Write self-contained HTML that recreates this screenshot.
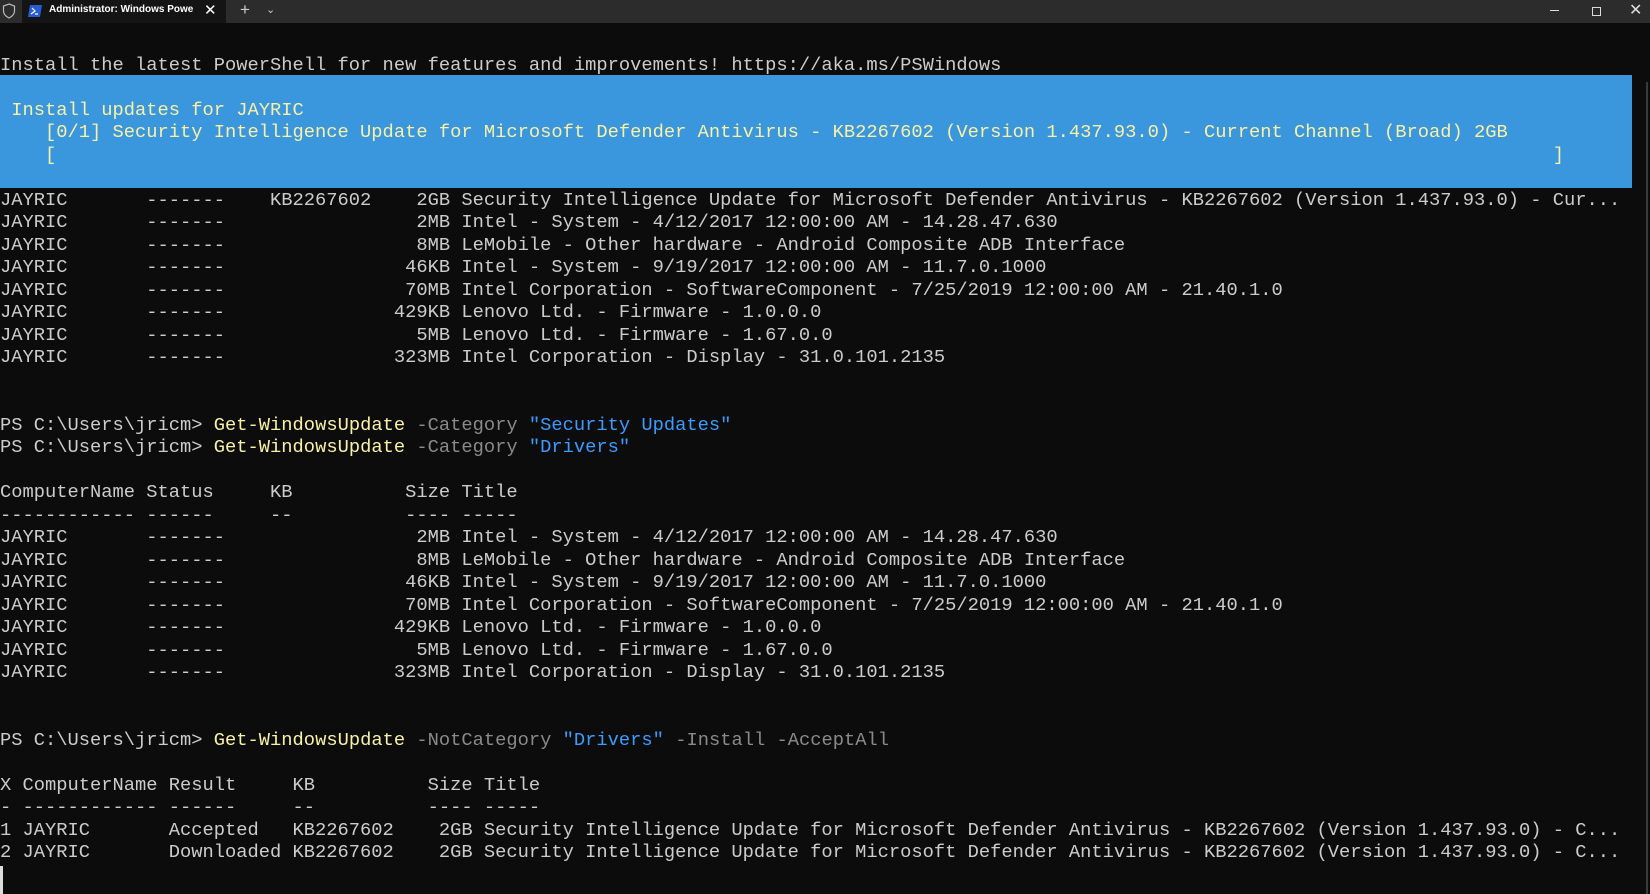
<!DOCTYPE html>
<html><head><meta charset="utf-8"><style>
html,body{margin:0;padding:0;background:#0c0c0c;width:1650px;height:894px;overflow:hidden}
#bar{position:absolute;left:0;top:0;width:1650px;height:23px;background:#2c2c2c}
#tab{position:absolute;left:22px;top:0;width:204px;height:23px;background:#141414;font:bold 10px "Liberation Sans",sans-serif;color:#fff}
#blue{position:absolute;left:0;top:75px;width:1632px;height:113px;background:#3a96dd}
pre{position:absolute;left:0;top:53.5px;margin:0;font:18.75px/22.5px "Liberation Mono",monospace;color:#cccccc;white-space:pre}
.y{color:#f9f1a5}.g{color:#8a8a8a}.b{color:#3b9bff}
</style></head><body>
<div id="bar">
 <svg style="position:absolute;left:2px;top:3px" width="14" height="16"><path d="M7 1 L12.5 3 V8 C12.5 11.5 10 13.5 7 15 C4 13.5 1.5 11.5 1.5 8 V3 Z" fill="none" stroke="#bbb" stroke-width="1.2"/></svg>
 <div id="tab">
  <svg style="position:absolute;left:6px;top:5px" width="14" height="12"><path d="M2 0 H14 L12 12 H0 Z" fill="#2a5bd6"/><path d="M4 3 L7 6 L3 9 M7 9 H10" stroke="#fff" stroke-width="1.2" fill="none"/></svg>
  <span style="position:absolute;left:27px;top:4px">Administrator: Windows Powe</span>
  <span style="position:absolute;left:182px;top:1px;font:15px 'Liberation Sans',sans-serif;font-weight:normal">✕</span>
 </div>
 <span style="position:absolute;left:240px;top:0px;color:#ccc;font:17px 'Liberation Sans',sans-serif">+</span>
 <span style="position:absolute;left:266px;top:3px;color:#ccc;font:11px 'Liberation Sans',sans-serif">⌄</span>
 <div style="position:absolute;left:1550px;top:10px;width:9px;height:1px;background:#ddd"></div>
 <div style="position:absolute;left:1592px;top:7px;width:7px;height:7px;border:1px solid #ddd"></div>
 <span style="position:absolute;left:1629px;top:0px;color:#ddd;font:16px 'Liberation Sans',sans-serif">✕</span>
</div>
<div id="blue"></div>
<div style="position:absolute;left:1646px;top:82px;width:2px;height:812px;background:#3a3a3a"></div>
<div style="position:absolute;left:0;top:866px;width:3px;height:28px;background:#ddd"></div>
<pre>Install the latest PowerShell for new features and improvements! https://aka.ms/PSWindows

<span class="y"> Install updates for JAYRIC
    [0/1] Security Intelligence Update for Microsoft Defender Antivirus - KB2267602 (Version 1.437.93.0) - Current Channel (Broad) 2GB
    [                                                                                                                                     ]</span>

JAYRIC       -------    KB2267602    2GB Security Intelligence Update for Microsoft Defender Antivirus - KB2267602 (Version 1.437.93.0) - Cur...
JAYRIC       -------                 2MB Intel - System - 4/12/2017 12:00:00 AM - 14.28.47.630
JAYRIC       -------                 8MB LeMobile - Other hardware - Android Composite ADB Interface
JAYRIC       -------                46KB Intel - System - 9/19/2017 12:00:00 AM - 11.7.0.1000
JAYRIC       -------                70MB Intel Corporation - SoftwareComponent - 7/25/2019 12:00:00 AM - 21.40.1.0
JAYRIC       -------               429KB Lenovo Ltd. - Firmware - 1.0.0.0
JAYRIC       -------                 5MB Lenovo Ltd. - Firmware - 1.67.0.0
JAYRIC       -------               323MB Intel Corporation - Display - 31.0.101.2135


PS C:\Users\jricm&gt; <span class="y">Get-WindowsUpdate</span> <span class="g">-Category</span> <span class="b">"Security Updates"</span>
PS C:\Users\jricm&gt; <span class="y">Get-WindowsUpdate</span> <span class="g">-Category</span> <span class="b">"Drivers"</span>

ComputerName Status     KB          Size Title
------------ ------     --          ---- -----
JAYRIC       -------                 2MB Intel - System - 4/12/2017 12:00:00 AM - 14.28.47.630
JAYRIC       -------                 8MB LeMobile - Other hardware - Android Composite ADB Interface
JAYRIC       -------                46KB Intel - System - 9/19/2017 12:00:00 AM - 11.7.0.1000
JAYRIC       -------                70MB Intel Corporation - SoftwareComponent - 7/25/2019 12:00:00 AM - 21.40.1.0
JAYRIC       -------               429KB Lenovo Ltd. - Firmware - 1.0.0.0
JAYRIC       -------                 5MB Lenovo Ltd. - Firmware - 1.67.0.0
JAYRIC       -------               323MB Intel Corporation - Display - 31.0.101.2135


PS C:\Users\jricm&gt; <span class="y">Get-WindowsUpdate</span> <span class="g">-NotCategory</span> <span class="b">"Drivers"</span> <span class="g">-Install -AcceptAll</span>

X ComputerName Result     KB          Size Title
- ------------ ------     --          ---- -----
1 JAYRIC       Accepted   KB2267602    2GB Security Intelligence Update for Microsoft Defender Antivirus - KB2267602 (Version 1.437.93.0) - C...
2 JAYRIC       Downloaded KB2267602    2GB Security Intelligence Update for Microsoft Defender Antivirus - KB2267602 (Version 1.437.93.0) - C...</pre>
</body></html>
